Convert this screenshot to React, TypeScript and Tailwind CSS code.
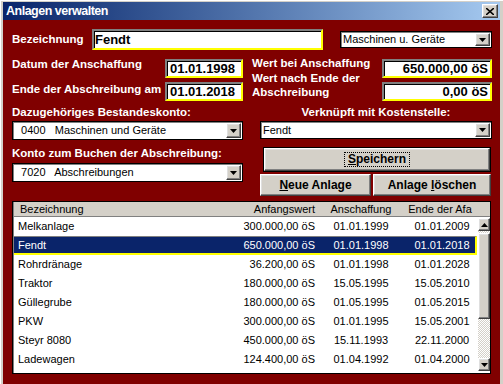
import React from "react"

const raised =
  "border border-t-white border-l-white border-r-[#404040] border-b-[#404040] shadow-[inset_-1px_-1px_0_#808080,inset_1px_1px_0_#dfdfdf]"

const sunkenYellow =
  "border-2 border-t-[#808080] border-l-[#808080] border-r-[#ffff00] border-b-[#ffff00] shadow-[inset_1px_1px_0_#000] bg-white"

function DownArrow() {
  return (
    <svg width="7" height="4" viewBox="0 0 7 4">
      <polygon points="0,0 7,0 3.5,4" fill="#000" />
    </svg>
  )
}

function Combo({ text, className }: { text: React.ReactNode; className: string }) {
  return (
    <div className={`flex items-stretch bg-white border border-black shadow-[inset_1px_1px_0_#808080] ${className}`}>
      <div className="flex-1 flex items-center pl-[2px] text-[11px] text-black whitespace-pre overflow-hidden">{text}</div>
      <div className={`w-[15px] m-[1px] bg-[#d4d0c8] flex items-center justify-center ${raised}`}>
        <DownArrow />
      </div>
    </div>
  )
}

const rows = [
  ["Melkanlage", "300.000,00 öS", "01.01.1999", "01.01.2009"],
  ["Fendt", "650.000,00 öS", "01.01.1998", "01.01.2018"],
  ["Rohrdränage", "36.200,00 öS", "01.01.1998", "01.01.2028"],
  ["Traktor", "180.000,00 öS", "15.05.1995", "15.05.2010"],
  ["Güllegrube", "180.000,00 öS", "01.05.1995", "01.05.2015"],
  ["PKW", "300.000,00 öS", "01.01.1995", "15.05.2001"],
  ["Steyr 8080", "450.000,00 öS", "15.11.1993", "22.11.2000"],
  ["Ladewagen", "124.400,00 öS", "01.04.1992", "01.04.2000"],
]

export default function App() {
  return (
    <div className="w-[503px] h-[384px] overflow-hidden bg-[#d4d0c8] border-l border-t border-white flex flex-col pl-[2px] pr-[3px] pt-[1px] font-['Liberation_Sans',Arial,sans-serif]">
      {/* Title bar */}
      <div className="h-[18px] flex items-center justify-between bg-linear-to-r from-[#0a246a] to-[#a6caf0] pl-[3px] pr-[2px]">
        <span className="text-white font-bold text-[12.5px] tracking-[-0.5px]">Anlagen verwalten</span>
        <div className={`w-[16px] h-[14px] bg-[#d4d0c8] flex items-center justify-center ${raised}`}>
          <svg width="8" height="7" viewBox="0 0 8 7">
            <path d="M0 0 L8 7 M8 0 L0 7" stroke="#000" strokeWidth="1.6" />
          </svg>
        </div>
      </div>

      {/* Body */}
      <div className="flex-1 bg-[#800000] pl-[9px] pr-[8px] pt-[9px] text-white">
        {/* Row 1 */}
        <div className="flex items-center h-[21px]">
          <div className="w-[80px] font-bold text-[11.5px]">Bezeichnung</div>
          <div className={`w-[231px] h-[21px] flex items-center pl-[1px] text-black font-bold text-[13px] ${sunkenYellow}`}>
            Fendt
          </div>
          <Combo text="Maschinen u. Geräte" className="ml-[17px] w-[152px] h-[17px]" />
        </div>

        {/* Rows 2 / 3 */}
        <div className="flex mt-[9px]">
          <div className="w-[231px] flex flex-col gap-[4px]">
            <div className="flex items-start h-[19px]">
              <div className="flex-1 font-bold text-[11.5px] leading-[14px] -mt-[2px]">Datum der Anschaffung</div>
              <div className={`w-[78px] h-[19px] flex items-center pl-[3px] text-black font-bold text-[13px] ${sunkenYellow}`}>
                01.01.1998
              </div>
            </div>
            <div className="flex items-start h-[19px]">
              <div className="flex-1 font-bold text-[11.5px] leading-[14px] whitespace-nowrap">Ende der Abschreibung am</div>
              <div className={`w-[78px] h-[19px] flex items-center pl-[3px] text-black font-bold text-[13px] ${sunkenYellow}`}>
                01.01.2018
              </div>
            </div>
          </div>
          <div className="ml-[9px] flex-1 flex">
            <div className="flex-1 flex flex-col font-bold text-[11.5px] leading-[14.5px] -mt-[3px]">
              <div>Wert bei Anschaffung</div>
              <div>Wert nach Ende der</div>
              <div>Abschreibung</div>
            </div>
            <div className="w-[110px] flex flex-col gap-[4px]">
              <div className={`h-[19px] flex items-center justify-end pr-[2px] text-black font-bold text-[13px] ${sunkenYellow}`}>
                650.000,00 öS
              </div>
              <div className={`h-[19px] flex items-center justify-end pr-[2px] text-black font-bold text-[13px] ${sunkenYellow}`}>
                0,00 öS
              </div>
            </div>
          </div>
        </div>

        {/* Accounts and buttons */}
        <div className="flex mt-[4px]">
          <div className="w-[231px] flex flex-col">
            <div className="h-[14px] font-bold text-[11.5px] leading-[14px]">Dazugehöriges Bestandeskonto:</div>
            <Combo text={"  0400   Maschinen und Geräte"} className="mt-[2px] h-[19px]" />
            <div className="mt-[6px] h-[14px] font-bold text-[11.5px] leading-[14px]">Konto zum Buchen der Abschreibung:</div>
            <Combo text={"  7020   Abschreibungen"} className="mt-[3px] h-[19px]" />
          </div>
          <div className="ml-[17px] flex-1 flex flex-col">
            <div className="h-[14px] font-bold text-[11.5px] leading-[14px] text-center">Verknüpft mit Kostenstelle:</div>
            <Combo text="Fendt" className="mt-[2px] h-[18px]" />
            <div className="mt-[8px] ml-[3px] mr-[1px] h-[25px] border border-black">
              <div className={`h-full bg-[#d4d0c8] flex items-center justify-center text-black font-bold text-[12px] ${raised}`}>
                <span className="outline-1 outline-dotted outline-black px-[3px] leading-[13px]">
                  <span className="underline">S</span>peichern
                </span>
              </div>
            </div>
            <div className="mt-[2px] flex gap-[2px] h-[22px] mr-[1px]">
              <div className={`w-[111px] bg-[#d4d0c8] flex items-center justify-center text-black font-bold text-[12px] ${raised}`}>
                <span>
                  <span className="underline">N</span>eue Anlage
                </span>
              </div>
              <div className={`flex-1 bg-[#d4d0c8] flex items-center justify-center text-black font-bold text-[12px] ${raised}`}>
                <span>
                  Anlage <span className="underline">l</span>öschen
                </span>
              </div>
            </div>
          </div>
        </div>

        {/* List */}
        <div className="mt-[5px] mr-[1px] h-[173px] bg-white border border-black shadow-[inset_1px_1px_0_#808080] flex flex-col text-[11px] text-black overflow-hidden">
          <div className="h-[15px] shrink-0 bg-[#d4d0c8] border-b border-[#808080] grid grid-cols-[200px_105px_82px_76px_1fr] items-center leading-[14px] ml-[1px]">
            <div className="pl-[6px]">Bezeichnung</div>
            <div className="text-right pr-[4px]">Anfangswert</div>
            <div className="text-center pl-[2px]">Anschaffung</div>
            <div className="text-center pl-[2px]">Ende der Afa</div>
            <div />
          </div>
          <div className="flex flex-1 ml-[1px]">
            <div className="w-[463px] flex flex-col">
              {rows.map((r, i) => {
                const sel = i === 1
                return (
                  <div
                    key={r[0]}
                    className={`h-[19px] shrink-0 grid grid-cols-[200px_105px_82px_76px] items-center ${
                      sel ? "bg-[#0a246a] text-white border-t border-t-[#808080] border-b-2 border-r-2 border-b-[#ffff00] border-r-[#ffff00]" : ""
                    }`}
                  >
                    <div className="pl-[4px]">{r[0]}</div>
                    <div className="text-right pr-[4px]">{r[1]}</div>
                    <div className="text-center pl-[2px]">{r[2]}</div>
                    <div className="text-center pl-[6px]">{r[3]}</div>
                  </div>
                )
              })}
            </div>
            {/* Scrollbar */}
            <div className="w-[15px] ml-[1px] mt-[1px] mb-[2px] flex flex-col bg-[repeating-conic-gradient(#d4d0c8_0%_25%,#ffffff_0%_50%)] bg-[length:2px_2px]">
              <div className={`h-[13px] shrink-0 bg-[#d4d0c8] flex items-center justify-center ${raised}`}>
                <svg width="7" height="4" viewBox="0 0 7 4">
                  <polygon points="0,4 7,4 3.5,0" fill="#000" />
                </svg>
              </div>
              <div className={`mt-[2px] h-[86px] shrink-0 bg-[#d4d0c8] ${raised}`} />
              <div className="flex-1" />
              <div className={`h-[13px] shrink-0 bg-[#d4d0c8] flex items-center justify-center ${raised}`}>
                <DownArrow />
              </div>
            </div>
          </div>
        </div>
      </div>
    </div>
  )
}
